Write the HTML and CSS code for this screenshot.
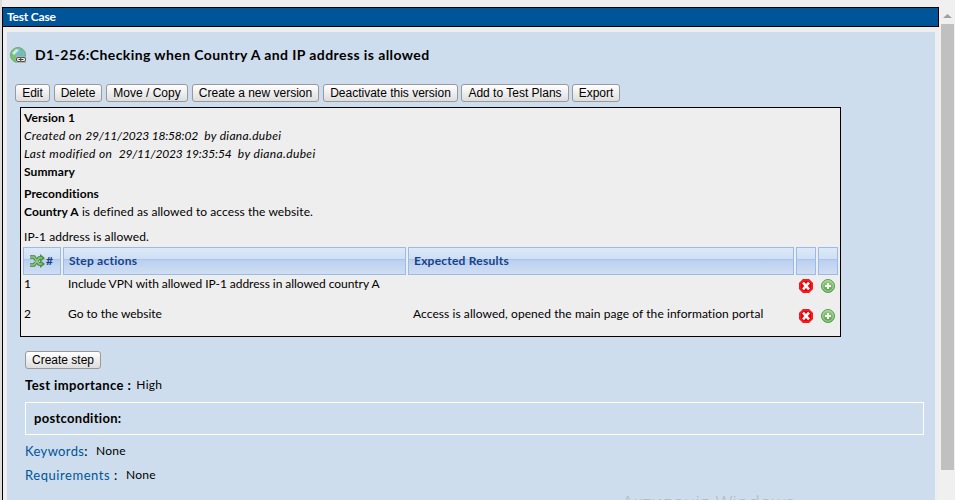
FILE: index.html
```
<!DOCTYPE html>
<html lang="en">
<head>
<meta charset="utf-8">
<title>Test Case</title>
<link rel="stylesheet" href="styles.css">
</head>
<body>
<svg class="defs" width="0" height="0"><defs>
<linearGradient id="gr" x2="0" y2="1"><stop offset="0" stop-color="#9bd184"/><stop offset="1" stop-color="#4fa246"/></linearGradient>
<symbol id="del" viewBox="0 0 14 14"><path d="M4 0h6l4 4v6l-4 4H4l-4-4V4z" fill="#f00006"/><path d="M4.500 1h5L13 4.500v5L9.500 13h-5L1 9.500v-5z" fill="none" stroke="#ff5d5d" stroke-width=".6"/><path d="M4 3.700l6 6.600M10 3.700l-6 6.600" stroke="#fff" stroke-width="2.600"/></symbol>
<symbol id="add" viewBox="0 0 14 14"><circle cx="7" cy="7" r="6.500" fill="url(#gr)" stroke="#5b9a52"/><circle cx="7" cy="7" r="5.300" fill="none" stroke="#b5dfa5" stroke-width=".8"/><path d="M7 4v6M4 7h6" stroke="#fff" stroke-width="2"/></symbol>
</defs></svg>
<div class="page">
<div class="frame">
<h1><span class="t s1">Test Case</span></h1>
<main>
<div class="title">
<svg width="17" height="17" viewBox="0 0 17 17"><circle cx="8" cy="8" r="7.500" fill="#77c46b" stroke="#70a579"/><path d="M5 2l5-1 1 5-3 4-5-2zM12 3l3 3-1 3-3-1z" fill="#78b9d9"/><path d="M2 6l4-4 3 1-5 5z" fill="#d3efcd"/><path d="M6 9h9l1 2v5H6z" fill="#a9b4ae"/><rect x="6.500" y="10.500" width="5" height="4" rx="1.500" fill="#eee" stroke="#4d5553"/><rect x="10.500" y="10.500" width="5" height="4" rx="1.500" fill="#eee" stroke="#4d5553"/><path d="M8.500 12.500h5" stroke="#444"/></svg>
<h2><span class="t s2">D1-256:Checking when Country A and IP address is allowed</span></h2>
</div>
<div class="buttons"><button class="b1">Edit</button><button class="b2">Delete</button><button class="b3">Move / Copy</button><button class="b4">Create a new version</button><button class="b5">Deactivate this version</button><button class="b6">Add to Test Plans</button><button class="b7">Export</button></div>
<section class="case">
<p><b class="t s3">Version 1</b></p>
<p><i class="t s4">Created on <span class="date">29/11/2023 18:58:02</span>&nbsp; by diana.dubei</i></p>
<p><i class="t s5">Last modified on&nbsp; <span class="date">29/11/2023 19:35:54</span>&nbsp; by diana.dubei</i></p>
<p><b class="t s6">Summary</b></p>
<p class="pre"><b class="t s7">Preconditions</b></p>
<p><span class="t s8"><b>Country A</b> is defined as allowed to access the website.</span></p>
<p class="ip"><span class="t s8">IP-1 address is allowed.</span></p>
<div class="grid head">
<div class="num"><svg width="16" height="14" viewBox="0 0 16 14"><path d="M1 3h4l5 7h2M1 11h4l5-7h2" fill="none" stroke="#41843f" stroke-width="3.400"/><path d="M11 0l5 4-5 4zM11 6l5 4-5 4z" fill="#4b9347"/><path d="M1 3h4l5 7h3M1 11h4l5-7h3" fill="none" stroke="#91c982" stroke-width="1.600"/></svg><span>#</span></div>
<div><span class="t s10">Step actions</span></div><div><span class="t s11">Expected Results</span></div><div></div><div></div>
</div>
<div class="grid row"><span>1</span><div><span class="t s12">Include VPN with allowed IP-1 address in allowed country A</span></div><div></div><svg><use href="#del"/></svg><svg><use href="#add"/></svg></div>
<div class="grid row"><span>2</span><div><span class="t">Go to the website</span></div><div><span class="t s14">Access is allowed, opened the main page of the information portal</span></div><svg><use href="#del"/></svg><svg><use href="#add"/></svg></div>
</section>
<button class="create">Create step</button>
<div class="importance"><b class="t s15">Test importance :</b><span class="t s16">High</span></div>
<div class="post"><b class="t s17">postcondition:</b></div>
<div class="meta"><span class="t s18"><a>Keywords</a>:</span><span class="t s19">None</span></div>
<div class="meta"><span class="t s20"><a>Requirements</a> :</span><span class="t s19">None</span></div>
</main>
<div class="watermark">Активація Windows</div>
</div>
<div class="scrollbar"><svg width="9" height="4" viewBox="0 0 9 4"><path d="M4.500 0L9 4H0z" fill="#a0a0a0"/></svg><div class="thumb"></div></div>
</div>
</body>
</html>
```
FILE: styles.css
```
*{box-sizing:border-box}
body{margin:0;background:#eee;color:#000;font:12px/18px "Trebuchet MS",Lato,"Open Sans",sans-serif;font-variant-ligatures:none;overflow:hidden}
h1,h2,p{margin:0}
.defs{position:absolute}
.page{display:flex;height:500px}
.frame{width:939px;height:500px;padding-top:7px;background:linear-gradient(#eee,#eee) 2px 0/937px 500px no-repeat,#ddd;position:relative;overflow:hidden}
h1{margin-left:2px;width:937px;height:20px;border:1px solid #000;background:#005498;color:#fff;font-size:12px;line-height:18px;padding-left:4px}
main{margin-left:2px;border-left:1px solid #000;padding:5px 4px 0;height:473px;background:linear-gradient(#cddded,#cddded) 4px 5px/928px 468px no-repeat}
.t{white-space:nowrap;display:inline-block}
.title{display:flex;height:46px;padding-left:3px;align-items:center}
h2{font-size:14px;line-height:18px;margin-left:8px}
.buttons{display:flex;margin:6px 0 0 8px;height:23px}
button{display:block;height:18px;padding:0;margin:0 4px 0 0;border:1px solid #999;border-radius:3px;background:linear-gradient(#fff,#ddd);font:12px/15px "Liberation Sans",sans-serif;color:#000;white-space:nowrap}
.b1{width:35px}.b2{width:48px}.b3{width:82px}.b4{width:127px}.b5{width:135px;margin-right:3px}.b6{width:108px;margin-right:3px}.b7{width:48px}
.case{margin-left:13px;width:821px;height:230px;border:1px solid #000;background:#eee;padding:1px 2px}
.case p{padding-left:1px;height:18px}
.case .pre{margin-top:4px}
.case .ip{margin-top:7px;height:19px}
.grid{display:grid;grid-template-columns:38px 343px 386px 20px 20px;column-gap:2px}
.head{height:27px;color:#15428b;font-weight:bold}
.head>div{border:1px solid #99bbe8;background:linear-gradient(#dce9f8 0,#cfdff4 43%,#a9c4ec 44%,#bbd0ef 48%,#d0def2 100%);padding:4px 5px}
.head .num{display:flex;align-items:center;padding:0 0 0 5px;gap:1px}
.row{height:30px}
.row>span{padding:1px 0 0 1px}
.row>div{padding:1px 0 0 5px}
.row>svg{width:14px;height:14px;margin:5px 0 0 3px}
.create{margin:14px 0 0 18px;width:76px}
.importance{margin:7px 0 0 18px;display:flex;gap:5px}
.post{margin:8px 0 4px 18px;width:899px;height:33px;border:1px solid #fff;padding:6px 8px;font-size:13px}
.meta{margin-left:18px;height:24px;display:flex;gap:8px;font-size:13px;align-items:center}
.meta a{color:#005498}
.s1{letter-spacing:-.2px}
.s2{letter-spacing:.41px}
.s3{letter-spacing:.1px}
.s4{letter-spacing:.32px}
.s5{letter-spacing:.37px}
.date{letter-spacing:-.18px}
.s6{letter-spacing:.1px}
.s7{letter-spacing:.1px}
.s8{letter-spacing:.085px}
.s10{letter-spacing:.25px}
.s11{letter-spacing:.23px}
.s12{letter-spacing:-.045px}
.s14{letter-spacing:.07px}
.s15{font-size:13px;letter-spacing:.42px}
.s16,.s19{font-size:12px;letter-spacing:.28px}
.s17{letter-spacing:.3px}
.s18{letter-spacing:.37px}
.s20{letter-spacing:.55px}
.watermark{position:absolute;left:622px;top:491px;font:300 19px/22px "Open Sans","Noto Sans",sans-serif;letter-spacing:.2px;color:#b1b8be;white-space:nowrap}
.scrollbar{width:16px;background:#f0f0f0;padding:14px 0 0 2px}
.scrollbar svg{display:block;margin-left:2px}
.thumb{width:13px;height:446px;margin-top:6px;background:#c0c0c0}
```
